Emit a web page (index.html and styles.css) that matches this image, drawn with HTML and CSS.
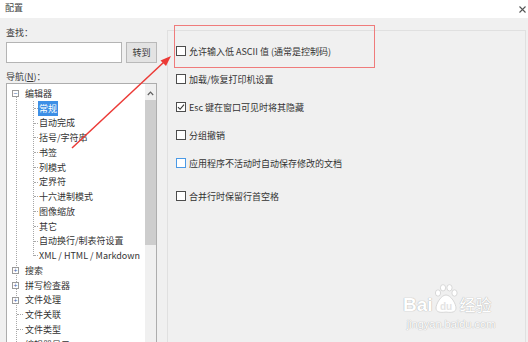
FILE: index.html
```html
<!DOCTYPE html>
<html lang="zh-CN">
<head>
    <meta charset="UTF-8">
    <title>配置</title>
    <link rel="stylesheet" href="styles.css">
</head>
<body>
<div class="window">
    <div class="titlebar">
        <span>配置</span>
        <svg class="close" width="7" height="7" viewBox="0 0 7 7"><path d="M0.5 0.5 L6.5 6.5 M6.5 0.5 L0.5 6.5" stroke="#555" stroke-width="1.1"/></svg>
    </div>

    <div class="main">
        <div class="left">
            <div class="label">查找：</div>
            <div class="search">
                <div class="input"></div>
                <div class="btn">转到</div>
            </div>
            <div class="label nav-label">导航(<u>N</u>)：</div>

            <div class="tree">
                <ul class="nav">
                    <li>
                        <div class="row"><span class="tog">−</span>编辑器</div>
                        <ul class="sub">
                            <li class="row"><span class="sel">常规</span></li>
                            <li class="row">自动完成</li>
                            <li class="row">括号/字符串</li>
                            <li class="row">书签</li>
                            <li class="row">列模式</li>
                            <li class="row">定界符</li>
                            <li class="row">十六进制模式</li>
                            <li class="row">图像缩放</li>
                            <li class="row">其它</li>
                            <li class="row">自动换行/制表符设置</li>
                            <li class="row">XML / HTML / Markdown</li>
                        </ul>
                    </li>
                    <li class="row"><span class="tog">+</span>搜索</li>
                    <li class="row"><span class="tog">+</span>拼写检查器</li>
                    <li class="row"><span class="tog">+</span>文件处理</li>
                    <li class="row leaf">文件关联</li>
                    <li class="row leaf">文件类型</li>
                    <li class="row leaf">编辑器显示</li>
                </ul>
                <div class="scrollbar">
                    <svg class="up" width="7" height="5" viewBox="0 0 7 5"><path d="M0.8 4 L3.5 1.2 L6.2 4" fill="none" stroke="#606060" stroke-width="1.2"/></svg>
                    <div class="thumb"></div>
                </div>
            </div>
        </div>

        <div class="panel">
            <div class="opt"><span class="box"></span>允许输入低 ASCII 值 (通常是控制码)</div>
            <div class="opt"><span class="box"></span>加载/恢复打印机设置</div>
            <div class="opt"><span class="box"><svg width="8" height="8" viewBox="0 0 8 8"><path d="M1 4.2 L3.1 6.3 L7 1.6" fill="none" stroke="#333" stroke-width="1.1"/></svg></span>Esc 键在窗口可见时将其隐藏</div>
            <div class="opt"><span class="box"></span>分组撤销</div>
            <div class="opt"><span class="box focus"></span>应用程序不活动时自动保存修改的文档</div>
            <div class="opt last"><span class="box"></span>合并行时保留行首空格</div>
        </div>
    </div>

    <!-- 标注 -->
    <div class="mark"></div>
    <svg class="arrow" width="528" height="342" viewBox="0 0 528 342">
        <line x1="72" y1="148" x2="164" y2="62" stroke="#ec3a36" stroke-width="1.5"/>
        <path d="M171 56 L160.5 60.5 L166 66 Z" fill="#ec3a36"/>
    </svg>

    <div class="watermark">
        <div class="wm-logo">
            <span class="bai">Bai</span>
            <svg class="paw" width="26" height="30" viewBox="0 0 26 30">
                <g fill="#fff" stroke="#cfcfcf" stroke-width="0.8">
                    <ellipse cx="5" cy="9" rx="2.6" ry="3.2"/>
                    <ellipse cx="10" cy="3.8" rx="2.6" ry="3.2"/>
                    <ellipse cx="16.5" cy="3.8" rx="2.6" ry="3.2"/>
                    <ellipse cx="21.5" cy="9" rx="2.6" ry="3.2"/>
                    <path d="M13 11 C8 11 3 20 3 24 C3 28 7 29 13 28 C19 29 23 28 23 24 C23 20 18 11 13 11 Z"/>
                </g>
                <text x="13" y="26" text-anchor="middle" class="du">du</text>
            </svg>
            <span class="jy">经验</span>
        </div>
        <div class="wm-url">jingyan.baidu.com</div>
    </div>
</div>
</body>
</html>
```

FILE: styles.css
```css
body {
    margin: 0;
    font-family: "Noto Sans CJK SC", "Noto Sans", sans-serif;
    font-size: 9px;
    color: #333;
    background-color: #f0f0f0;
}

.window {
    position: relative;
    width: 528px;
    height: 342px;
    overflow: hidden;
}

.titlebar {
    height: 18px;
    box-sizing: border-box;
    padding: 0 2px 4px 5px;
    background-color: #fff;
    display: flex;
    align-items: center;
    justify-content: space-between;
}

.titlebar span {
    font-size: 9px;
    color: #444;
}

.close {
    margin-top: 4px;
}

.main {
    display: flex;
    gap: 10px;
    height: 324px;
    padding-left: 6px;
}

.left {
    width: 151px;
    display: flex;
    flex-direction: column;
}

.label {
    flex-shrink: 0;
    height: 13px;
    line-height: 13px;
    margin-top: 8px;
    color: #3a3a3a;
}

.nav-label {
    margin-top: 7px;
}

.search {
    flex-shrink: 0;
    display: flex;
    gap: 4px;
    margin-top: 3px;
    height: 21px;
}

.input {
    width: 116px;
    box-sizing: border-box;
    border: 1px solid #b4b4b4;
    background-color: #fff;
}

.btn {
    width: 31px;
    box-sizing: border-box;
    border: 1px solid #b9b9b9;
    background-color: #e3e3e3;
    display: flex;
    align-items: center;
    justify-content: center;
    color: #3a3a3a;
}

.tree {
    flex: 1;
    min-height: 0;
    display: flex;
    border: 1px solid #adadad;
    border-bottom: none;
    background-color: #fff;
    overflow: hidden;
}

.nav {
    flex: 1;
    list-style: none;
    margin: 0;
    padding: 2px 0 0 0;
    white-space: nowrap;
    overflow: hidden;
    background: repeating-linear-gradient(to bottom, #a8a8a8 0 1px, transparent 1px 2px) 9px 13px / 1px 100% no-repeat;
}

.nav ul {
    list-style: none;
    margin: 0;
    padding: 0;
}

.row {
    height: 14.75px;
    display: flex;
    align-items: center;
    padding-left: 18px;
    position: relative;
    color: #333;
}

.tog {
    position: absolute;
    left: 5px;
    top: 4px;
    width: 7px;
    height: 7px;
    box-sizing: border-box;
    border: 1px solid #9a9a9a;
    background-color: #fff;
    font-size: 7px;
    line-height: 5px;
    text-align: center;
    color: #3f66a8;
}

.leaf::before {
    content: "";
    position: absolute;
    left: 10px;
    top: 7px;
    width: 6px;
    border-top: 1px dotted #a8a8a8;
}

.sub {
    background: repeating-linear-gradient(to bottom, #a8a8a8 0 1px, transparent 1px 2px) 26px 0 / 1px calc(100% - 7px) no-repeat;
}

.sub .row {
    padding-left: 32px;
}

.sub .row::before {
    content: "";
    position: absolute;
    left: 27px;
    top: 7px;
    width: 4px;
    border-top: 1px dotted #a8a8a8;
}

.sel {
    background-color: #3d8fe6;
    color: #fff;
    padding: 1px 1px;
    margin-left: -1px;
}

.scrollbar {
    flex-shrink: 0;
    width: 11px;
    background-color: #f0f0f0;
    display: flex;
    flex-direction: column;
    align-items: center;
}

.up {
    flex-shrink: 0;
    margin-top: 7px;
    margin-bottom: 4px;
}

.thumb {
    flex-shrink: 0;
    width: 11px;
    height: 145px;
    background-color: #cdcdcd;
}

.panel {
    flex: 1;
    margin-top: 12px;
    margin-right: 2px;
    border: 1px solid #e0e0e0;
    border-bottom: none;
    background-color: #f0f0f0;
    padding: 13px 8px;
    display: flex;
    flex-direction: column;
    gap: 14px;
}

.opt {
    flex-shrink: 0;
    height: 14px;
    display: flex;
    align-items: center;
    gap: 3px;
    color: #333;
}

.opt.last {
    margin-top: 5px;
}

.box {
    width: 10px;
    height: 10px;
    box-sizing: border-box;
    border: 1px solid #4d4d4d;
    background-color: #fff;
    display: flex;
    align-items: center;
    justify-content: center;
}

.box.focus {
    border-color: #4b9ae6;
}

/* annotation overlay */
.mark {
    position: absolute;
    left: 174px;
    top: 25px;
    width: 201px;
    height: 43px;
    box-sizing: border-box;
    border: 1px solid #ef7b7b;
}

.arrow {
    position: absolute;
    left: 0;
    top: 0;
}

.watermark {
    position: absolute;
    left: 403px;
    top: 282px;
    width: 96px;
    text-align: center;
}

.wm-logo {
    display: flex;
    align-items: flex-end;
    height: 32px;
}

.bai, .jy {
    font-family: "Liberation Sans", Arial, sans-serif;
    font-size: 19px;
    font-weight: bold;
    line-height: 19px;
    color: #fff;
    text-shadow: 0 0 1px #b5b5b5, 0 0 1px #b5b5b5;
}

.jy {
    font-family: "Noto Sans CJK SC", sans-serif;
    font-size: 16px;
    font-weight: normal;
    margin-left: 1px;
}

.paw .du {
    font-family: "Liberation Sans", Arial, sans-serif;
    font-size: 10px;
    font-weight: bold;
    fill: #e4e4e4;
}

.wm-url {
    margin-top: 4px;
    font-family: "Liberation Sans", Arial, sans-serif;
    font-size: 11px;
    color: #fff;
    text-shadow: 0 0 1px #b5b5b5, 0 0 1px #b5b5b5;
}
```
